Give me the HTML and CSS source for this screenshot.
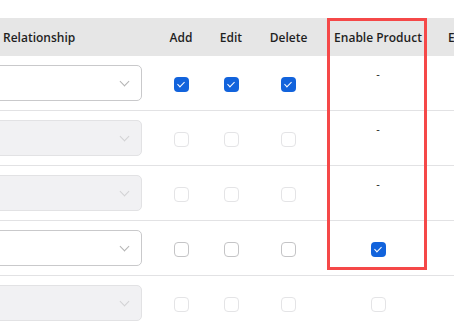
FILE: index.html
```html
<!DOCTYPE html>
<html lang="en">
    <head>
        <meta charset="UTF-8">
        <meta name="viewport" content="width=device-width, initial-scale=1.0">
        <title>Relationship Permissions</title>
        <link rel="stylesheet" href="styles.css">
    </head>
    <body>
        <div class="table-wrap">
            <table class="perm-table">
                <colgroup>
                    <col class="col-rel">
                    <col class="col-add">
                    <col class="col-edit">
                    <col class="col-del">
                    <col class="col-enable">
                    <col class="col-next">
                </colgroup>
                <thead>
                    <tr>
                        <th class="th-rel">Relationship</th>
                        <th>Add</th>
                        <th>Edit</th>
                        <th>Delete</th>
                        <th>Enable Product</th>
                        <th class="th-next">Enable Service</th>
                    </tr>
                </thead>
                <tbody>
                    <tr>
                        <td><div class="select"><span class="chev"></span></div></td>
                        <td><span class="check checked"></span></td>
                        <td><span class="check checked"></span></td>
                        <td><span class="check checked"></span></td>
                        <td class="dash-cell">-</td>
                        <td></td>
                    </tr>
                    <tr>
                        <td><div class="select disabled"><span class="chev"></span></div></td>
                        <td><span class="check disabled"></span></td>
                        <td><span class="check disabled"></span></td>
                        <td><span class="check disabled"></span></td>
                        <td class="dash-cell">-</td>
                        <td></td>
                    </tr>
                    <tr>
                        <td><div class="select disabled"><span class="chev"></span></div></td>
                        <td><span class="check disabled"></span></td>
                        <td><span class="check disabled"></span></td>
                        <td><span class="check disabled"></span></td>
                        <td class="dash-cell">-</td>
                        <td></td>
                    </tr>
                    <tr>
                        <td><div class="select"><span class="chev"></span></div></td>
                        <td><span class="check"></span></td>
                        <td><span class="check"></span></td>
                        <td><span class="check"></span></td>
                        <td><span class="check checked"></span></td>
                        <td></td>
                    </tr>
                    <tr>
                        <td><div class="select disabled"><span class="chev"></span></div></td>
                        <td><span class="check disabled"></span></td>
                        <td><span class="check disabled"></span></td>
                        <td><span class="check disabled"></span></td>
                        <td><span class="check disabled"></span></td>
                        <td></td>
                    </tr>
                </tbody>
            </table>
            <!-- highlight around the Enable Product column -->
            <div class="highlight"></div>
        </div>
    </body>
</html>
```

FILE: styles.css
```css
body {
margin: 0;
padding: 18px 0 0;
font-family: "Open Sans", "Liberation Sans", sans-serif;
color: #1f1f1f;
background-color: #ffffff;
overflow: hidden;
}

.table-wrap {
position: relative;
}

.perm-table {
border-collapse: collapse;
table-layout: fixed;
width: 520px;
margin-left: -20px;
}

.col-rel { width: 175px; }
.col-add { width: 52px; }
.col-edit { width: 48px; }
.col-del { width: 67px; }
.col-enable { width: 112px; }
.col-next { width: 66px; }

/* Header */
.perm-table th {
height: 38px;
padding: 0;
background-color: #e6e6e6;
font-size: 12px;
font-weight: 600;
text-align: center;
white-space: nowrap;
overflow: hidden;
}

.perm-table .th-rel {
text-align: left;
padding-left: 23px;
}

.perm-table .th-next {
text-align: left;
padding-left: 14px;
}

/* Rows */
.perm-table td {
height: 54px;
padding: 0;
border-bottom: 1px solid #e2e2e4;
text-align: center;
vertical-align: middle;
}

.perm-table td:first-child {
padding-right: 13px;
}

.dash-cell {
font-size: 11px;
line-height: 15px;
color: #111;
}

.perm-table td.dash-cell {
vertical-align: top;
padding-top: 10px;
height: 44px;
}

/* Select box */
.select {
position: relative;
height: 34px;
border: 1px solid #c9c9cb;
border-radius: 5px;
background-color: #ffffff;
}

.select.disabled {
background-color: #f1f1f3;
border-color: #e2e2e4;
}

.chev {
position: absolute;
right: 13px;
top: 12px;
width: 6px;
height: 6px;
border-right: 1px solid #b4b4b4;
border-bottom: 1px solid #b4b4b4;
transform: rotate(45deg);
}

.select.disabled .chev {
border-color: #d2d2d4;
}

/* Checkboxes */
.check {
display: inline-block;
box-sizing: border-box;
width: 15px;
height: 15px;
border: 1.5px solid #c4c4c6;
border-radius: 4px;
vertical-align: middle;
position: relative;
}

.check.disabled {
border-color: #e4e4e6;
}

.check.checked {
border: none;
background-color: #1263dc;
}

.check.checked::after {
content: "";
position: absolute;
left: 5px;
top: 3px;
width: 3px;
height: 6px;
border-right: 1px solid #ffffff;
border-bottom: 1px solid #ffffff;
transform: rotate(45deg);
}

/* Highlight box */
.highlight {
position: absolute;
left: 327px;
top: 0;
width: 94px;
height: 246px;
border: 3px solid #f54848;
pointer-events: none;
}
```
